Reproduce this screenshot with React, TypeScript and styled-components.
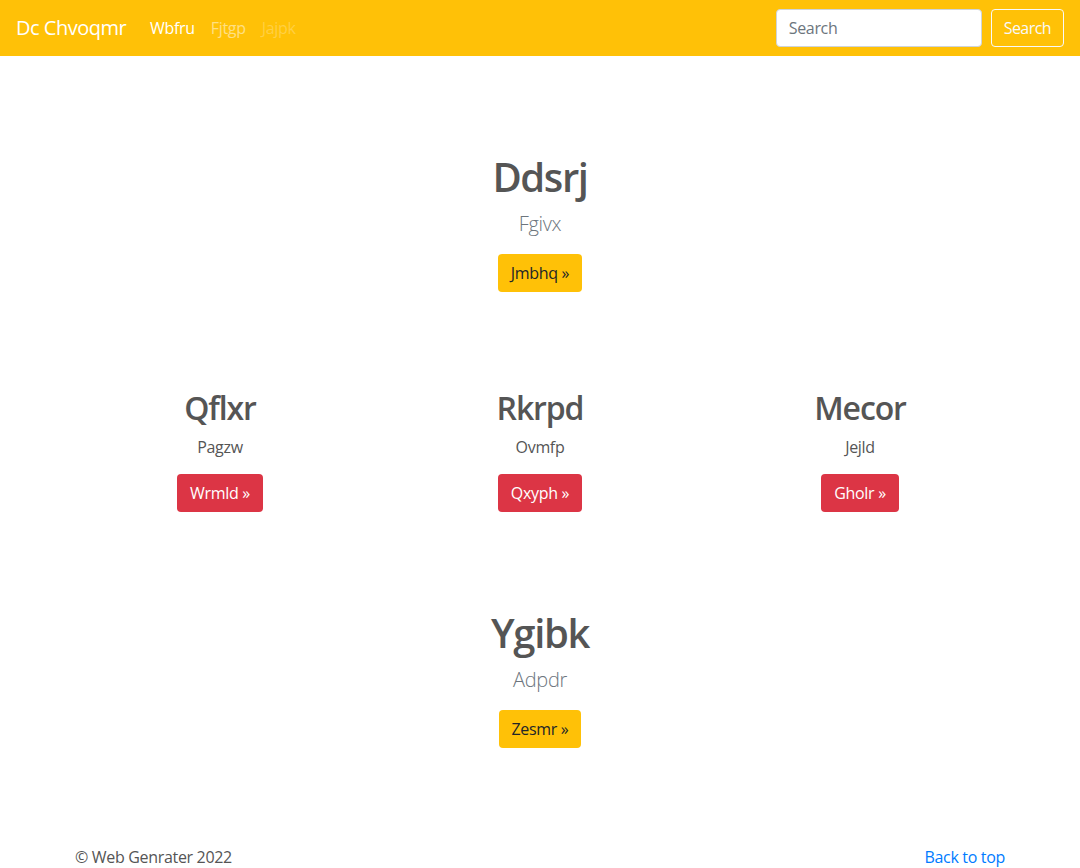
import React from "react";
import styled, { createGlobalStyle } from "styled-components";

const GlobalStyle = createGlobalStyle`
  * {
    box-sizing: border-box;
  }

  body {
    margin: 0;
    font-family: "Open Sans", "Noto Sans", Roboto, sans-serif;
    font-size: 16px;
    line-height: 1.5;
    letter-spacing: -0.02em;
    color: #555;
    background-color: #fff;
  }
`;

const Navbar = styled.nav`
  display: flex;
  align-items: center;
  justify-content: space-between;
  height: 56px;
  padding: 0 16px;
  background-color: #ffc107;
`;

const NavLeft = styled.div`
  display: flex;
  align-items: center;
`;

const Brand = styled.a`
  margin-right: 16px;
  font-size: 20px;
  line-height: 30px;
  letter-spacing: -0.025em;
  color: #fff;
  text-decoration: none;
`;

const NavList = styled.ul`
  display: flex;
  margin: 0;
  padding: 0;
  list-style: none;
`;

const NavLink = styled.a<{ $state: "active" | "normal" | "disabled" }>`
  display: block;
  padding: 8px;
  font-weight: 500;
  text-decoration: none;
  color: ${(p) =>
    p.$state === "active"
      ? "#fff"
      : p.$state === "normal"
      ? "rgba(255, 255, 255, 0.5)"
      : "rgba(255, 255, 255, 0.25)"};
`;

const SearchForm = styled.form`
  display: flex;
  align-items: center;
  gap: 9px;
`;

const SearchInput = styled.input`
  width: 206px;
  height: 38px;
  padding: 6px 12px;
  font-family: inherit;
  font-size: 16px;
  letter-spacing: inherit;
  color: #495057;
  background: #fff;
  border: 1px solid #ced4da;
  border-radius: 4px;

  &::placeholder {
    color: #6c757d;
  }
`;

const OutlineButton = styled.button`
  height: 38px;
  padding: 6px 12px;
  font-family: inherit;
  font-size: 16px;
  letter-spacing: -0.035em;
  color: #f8f9fa;
  background: transparent;
  border: 1px solid #f8f9fa;
  border-radius: 4px;
`;

const Main = styled.main`
  padding-top: 97px;
`;

const Section = styled.section`
  text-align: center;
`;

const Container = styled.div`
  width: 960px;
  margin: 0 auto;
  padding: 0 15px;
`;

const Row = styled.div`
  display: grid;
  grid-template-columns: repeat(3, 1fr);
  margin: 97px -15px 97px;
`;

const Col = styled.div`
  padding: 0 15px;
  text-align: center;
`;

const Title = styled.h1`
  margin: 0 0 8px;
  font-size: 40px;
  font-weight: 600;
  line-height: 1.2;
  letter-spacing: -0.035em;
  color: #555;
`;

const SubTitle = styled.h2`
  margin: 0 0 8px;
  font-size: 32px;
  font-weight: 600;
  line-height: 1.2;
  letter-spacing: -0.035em;
  color: #555;
`;

const Lead = styled.p`
  margin: 0 0 15px;
  font-size: 20px;
  font-weight: 300;
  color: #6c757d;
`;

const Text = styled.p`
  margin: 0 0 15px;
`;

const ActionButton = styled.a<{ $variant: "warning" | "danger" }>`
  display: inline-block;
  padding: 6px 12px;
  font-size: 16px;
  line-height: 24px;
  border: 1px solid transparent;
  border-radius: 4px;
  text-decoration: none;
  color: ${(p) => (p.$variant === "warning" ? "#212529" : "#fff")};
  background-color: ${(p) => (p.$variant === "warning" ? "#ffc107" : "#dc3545")};
`;

const Footer = styled.footer`
  display: flex;
  justify-content: space-between;
  margin-top: 97px;
`;

const FooterText = styled.p`
  margin: 0;
`;

const FooterLink = styled.a`
  color: #007bff;
  text-decoration: none;
`;

const columns = [
  { title: "Qflxr", text: "Pagzw", action: "Wrmld" },
  { title: "Rkrpd", text: "Ovmfp", action: "Qxyph" },
  { title: "Mecor", text: "Jejld", action: "Gholr" },
];

export default function App() {
  return (
    <>
      <GlobalStyle />
      <Navbar>
        <NavLeft>
          <Brand href="#">Dc Chvoqmr</Brand>
          <NavList>
            <li>
              <NavLink href="#" $state="active">
                Wbfru
              </NavLink>
            </li>
            <li>
              <NavLink href="#" $state="normal">
                Fjtgp
              </NavLink>
            </li>
            <li>
              <NavLink href="#" $state="disabled">
                Jajpk
              </NavLink>
            </li>
          </NavList>
        </NavLeft>
        <SearchForm onSubmit={(e) => e.preventDefault()}>
          <SearchInput type="search" placeholder="Search" />
          <OutlineButton type="submit">Search</OutlineButton>
        </SearchForm>
      </Navbar>
      <Main>
        <Section>
          <Title>Ddsrj</Title>
          <Lead>Fgivx</Lead>
          <ActionButton href="#" $variant="warning">
            Jmbhq &raquo;
          </ActionButton>
        </Section>
        <Container>
          <Row>
            {columns.map((c) => (
              <Col key={c.title}>
                <SubTitle>{c.title}</SubTitle>
                <Text>{c.text}</Text>
                <ActionButton href="#" $variant="danger">
                  {c.action} &raquo;
                </ActionButton>
              </Col>
            ))}
          </Row>
        </Container>
        <Section>
          <Title>Ygibk</Title>
          <Lead>Adpdr</Lead>
          <ActionButton href="#" $variant="warning">
            Zesmr &raquo;
          </ActionButton>
        </Section>
        <Container>
          <Footer>
            <FooterText>&copy; Web Genrater 2022</FooterText>
            <FooterLink href="#">Back to top</FooterLink>
          </Footer>
        </Container>
      </Main>
    </>
  );
}
